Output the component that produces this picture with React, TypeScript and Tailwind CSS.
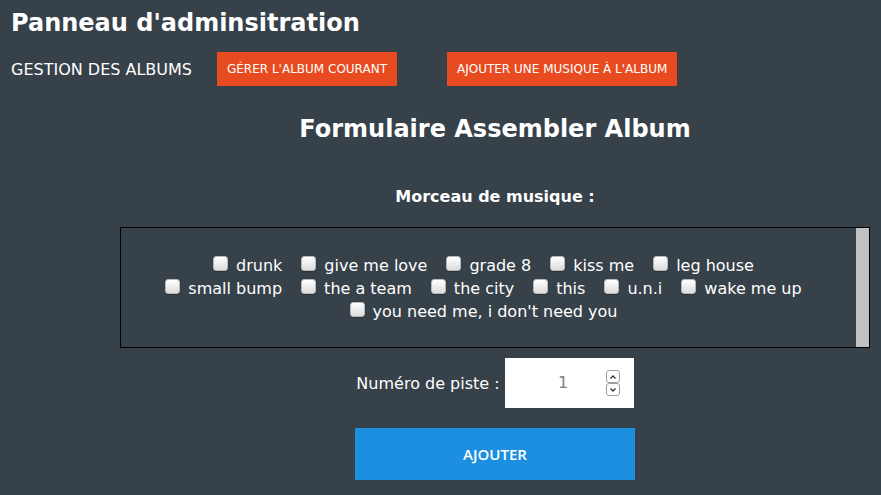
import React from "react";

const rows: string[][] = [
  ["drunk", "give me love", "grade 8", "kiss me", "leg house"],
  ["small bump", "the a team", "the city", "this", "u.n.i", "wake me up"],
  ["you need me, i don't need you"],
];

function Box() {
  return (
    <span className="mt-[2px] mr-[8px] inline-block h-[15px] w-[15px] shrink-0 rounded-[3px] border border-[#b8b8b8] bg-gradient-to-b from-[#ffffff] to-[#dcdcdc] shadow-[0_1px_1px_rgba(0,0,0,0.25)]" />
  );
}

export default function App() {
  return (
    <div className="min-h-screen w-full bg-[#36414a] text-white font-['DejaVu_Sans',sans-serif] pb-[15px]">
      <header className="px-[11px] pt-[9px]">
        <h1 className="text-[24px] leading-[28px] font-bold">Panneau d'adminsitration</h1>
        <nav className="mt-[15px] flex h-[34px] items-center">
          <span className="text-[16px] leading-[19px]">GESTION DES ALBUMS</span>
          <button className="ml-[25px] h-[34px] bg-[#e84b1f] px-[10px] text-[12px] text-white">
            GÉRER L'ALBUM COURANT
          </button>
          <button className="ml-[50px] h-[34px] bg-[#e84b1f] px-[10px] text-[12px] text-white">
            AJOUTER UNE MUSIQUE À L'ALBUM
          </button>
        </nav>
      </header>
      <main className="ml-[110px] w-[770px]">
        <h2 className="mt-[29px] text-center text-[24px] leading-[28px] font-bold">
          Formulaire Assembler Album
        </h2>
        <p className="mt-[44px] text-center text-[16px] leading-[19px] font-bold">Morceau de musique :</p>
        <div className="mx-[10px] mt-[21px] flex h-[121px] border border-black">
          <div className="flex-1 pt-[26px] pr-[10px] text-[16px] leading-[23px]">
            {rows.map((r, i) => (
              <div key={i} className="flex justify-center gap-[19px]">
                {r.map((t) => (
                  <label key={t} className="flex items-start">
                    <Box />
                    <span>{t}</span>
                  </label>
                ))}
              </div>
            ))}
          </div>
          <div className="w-[13px] bg-[#c1c1c1]" />
        </div>
        <div className="mt-[10px] flex items-center justify-center">
          <span className="text-[16px] leading-[19px]">Numéro de piste :</span>
          <div className="ml-[5px] flex h-[50px] w-[129px] items-center bg-white">
            <span className="flex-1 pl-[16px] text-center text-[16px] text-[#808080]">1</span>
            <div className="mr-[14px] flex flex-col">
              <span className="flex h-[13px] w-[14px] items-center justify-center rounded-[3px] border border-[#a0a0a0] bg-white">
                <svg width="8" height="6" viewBox="0 0 8 6">
                  <polyline points="1.5,4.5 4,2 6.5,4.5" fill="none" stroke="#333" strokeWidth="1.3" />
                </svg>
              </span>
              <span className="flex h-[13px] w-[14px] items-center justify-center rounded-[3px] border border-[#a0a0a0] bg-white">
                <svg width="8" height="6" viewBox="0 0 8 6">
                  <polyline points="1.5,1.5 4,4 6.5,1.5" fill="none" stroke="#333" strokeWidth="1.3" />
                </svg>
              </span>
            </div>
          </div>
        </div>
        <button className="mx-auto mt-[20px] block h-[52px] w-[280px] bg-[#1c8fe0] font-['Open_Sans',sans-serif] text-[15px] font-semibold text-white">
          AJOUTER
        </button>
      </main>
    </div>
  );
}
